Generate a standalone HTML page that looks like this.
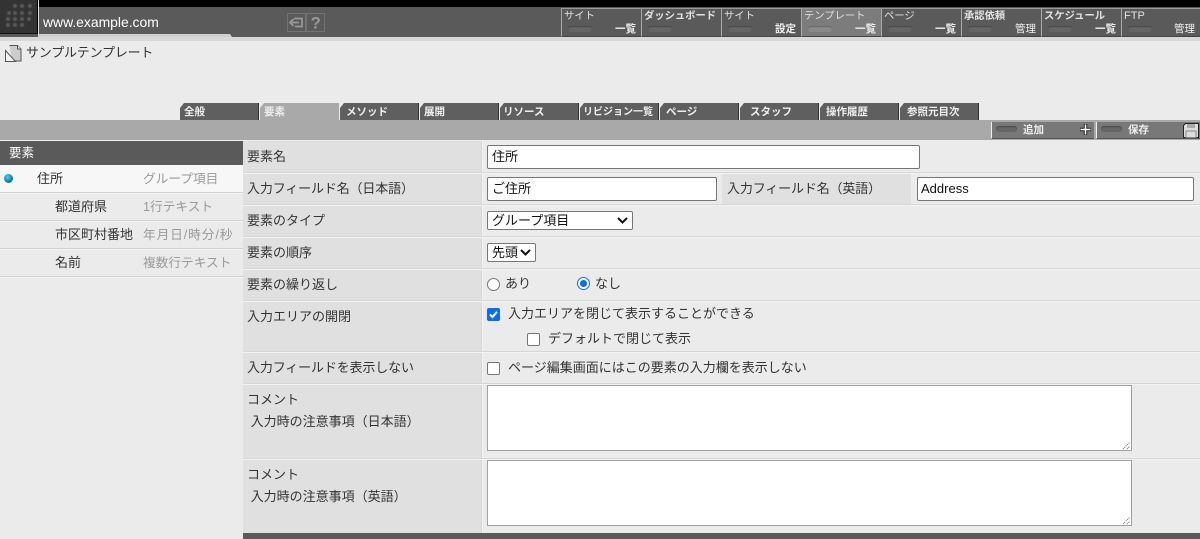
<!DOCTYPE html>
<html lang="ja"><head><meta charset="utf-8"><title>Template</title>
<style>
*{box-sizing:border-box}
html,body{margin:0;padding:0;width:1200px;height:539px;overflow:hidden;background:#ebebeb}
body{position:relative;font-family:"Liberation Sans","Noto Sans CJK JP",sans-serif;font-size:13px;color:#333}
.a{position:absolute}
.t{position:absolute;white-space:nowrap;line-height:16px}
.n{position:absolute;top:8px;width:80px;height:29px;background:#5a5a5a;border-left:1px solid #aaa;border-top:1px solid #999;border-bottom:1px solid #444;color:#e2e2e2;font-size:10.3px}
.n i{position:absolute;left:6px;top:17px;width:24px;height:6px;border-radius:3px;background:#666;box-shadow:inset 0 1px 1px #484848}
.n b{position:absolute;left:2px;top:1px;font-weight:normal;line-height:13px;white-space:nowrap}
.n u{position:absolute;right:5px;top:14px;text-decoration:none;font-weight:bold;line-height:13px;font-size:10.5px;color:#eee}
.tab{position:absolute;top:103px;width:79px;height:17px;background:#5f5f5f;color:#eee;font-size:10.5px;font-weight:bold;line-height:18px;padding-left:4px;white-space:nowrap;clip-path:polygon(4px 0,100% 0,100% 100%,0 100%,0 5px);border-right:1px solid #333}
.lb{position:absolute;background:#e0e0e0;left:243px;width:238px;padding:8px 0 0 4px;line-height:16px;color:#333;font-size:13px;white-space:nowrap}
.ln{position:absolute;left:243px;width:957px;height:2px;background:#d6d6d6;border-bottom:1px solid #f4f4f4}
.in{position:absolute;height:24px;background:#fff;border:1px solid #767676;border-radius:2px;padding:0 4px;font-size:13px;line-height:22px;color:#111;white-space:nowrap}
.sel{position:absolute;height:19px;background:#fff;border:1px solid #767676;border-radius:2px;padding-left:4px;font-size:13px;line-height:17px;color:#111;white-space:nowrap}
.ck{position:absolute;width:13px;height:13px;background:#fff;border:1px solid #767676;border-radius:2px}
.ta{position:absolute;left:487px;width:645px;height:66px;background:#fff;border:1px solid #a0a0a0}
.li{position:absolute;left:0;width:243px;height:2px;background:#d0d0d0;border-bottom:1px solid #f5f5f5}
.gr{color:#999;font-size:12.7px}
.bt{position:absolute;top:122px;height:17px;background:#787878;border-left:1px solid #eee;border-bottom:1px solid #555;color:#eee;font-size:10.5px;font-weight:bold}
.pl{position:absolute;left:4px;top:4px;width:21px;height:6px;border-radius:3px;background:#666;box-shadow:inset 0 1px 1px #484848}
</style></head><body>
<div class="a" style="left:0;top:0;width:1200px;height:7px;background:#000"></div>
<div class="a" style="left:0;top:7px;width:1200px;height:30px;background:#5a5a5a"></div>
<div class="a" style="left:38px;top:34px;width:194px;height:3px;background:#cfcfcf;clip-path:polygon(0 0,192px 0,100% 100%,0 100%)"></div>
<div class="a" style="left:0;top:37px;width:1200px;height:4px;background:#d8d8d8"></div>
<div class="a" style="left:0;top:0;width:38px;height:34px;background:#333;border-right:1px solid #000;border-bottom:1px solid #111"></div>
<div class="a" style="left:38px;top:0;width:1px;height:34px;background:#ddd"></div>
<svg class="a" style="left:0;top:0" width="38" height="34" fill="#5c5c5c">
<filter id="b"><feGaussianBlur stdDeviation=".5"/></filter>
<g filter="url(#b)">
<circle cx="15" cy="6" r="2"/><circle cx="22" cy="6" r="2"/><circle cx="30" cy="6" r="2"/>
<circle cx="9" cy="13" r="2"/><circle cx="15" cy="13" r="2"/><circle cx="22" cy="13" r="2"/><circle cx="30" cy="13" r="2"/>
<circle cx="8" cy="19" r="2"/><circle cx="15" cy="19" r="2"/><circle cx="22" cy="19" r="2"/><circle cx="29" cy="19" r="2"/>
<circle cx="8" cy="25" r="2"/><circle cx="15" cy="25" r="2"/><circle cx="22" cy="25" r="2"/>
</g></svg>
<div class="t" style="left:43px;top:14px;color:#fff;font-size:13.9px">www.example.com</div>
<svg class="a" style="left:287px;top:13px" width="38" height="20">
<rect x="0.500" y="0.500" width="18" height="18" fill="#5a5a5a" stroke="#737373"/>
<rect x="19.500" y="0.500" width="18" height="18" fill="#5a5a5a" stroke="#737373"/>
<path d="M3 9.500h9M6.500 6L3 9.500l3.500 3.500M7 5.500h8v8H8" fill="none" stroke="#999" stroke-width="1.700"/>
<text x="23.500" y="15.500" font-size="17" font-weight="bold" fill="#999" font-family="Liberation Sans">?</text>
</svg>
<div class="n" style="left:561px"><b>サイト</b><i></i><u>一覧</u></div>
<div class="n" style="left:641px"><b style="font-weight:bold">ダッシュボード</b><i></i></div>
<div class="n" style="left:721px"><b>サイト</b><i></i><u>設定</u></div>
<div class="n" style="left:801px;background:#7c7c7c"><b>テンプレート</b><i style="background:#8a8a8a;box-shadow:inset 0 1px 1px #666"></i><u>一覧</u></div>
<div class="n" style="left:881px"><b>ページ</b><i></i><u>一覧</u></div>
<div class="n" style="left:961px"><b style="font-weight:bold">承認依頼</b><i></i><u style="font-weight:normal">管理</u></div>
<div class="n" style="left:1041px"><b style="font-weight:bold">スケジュール</b><i></i><u>一覧</u></div>
<div class="n" style="left:1121px;width:79px"><b style="font-size:11px">FTP</b><i></i><u style="font-weight:normal">管理</u></div>

<svg class="a" style="left:5px;top:45px" width="17" height="17" fill="none" stroke="#555">
<path d="M4.500 .5h8l3.500 3.500v12h-9" fill="#ccc"/><path d="M.5 5.500l10 11H.5z" fill="#f2f2f2"/><path d="M12.500 .5v3.500h3.500" fill="#eee"/>
</svg>
<div class="t" style="left:26px;top:45px;font-size:13px;letter-spacing:-.2px;color:#333">サンプルテンプレート</div>

<div class="tab" style="left:180px">全般</div>
<div class="tab" style="left:260px;background:#a9a9a9;border-right:0;width:79px">要素</div>
<div class="tab" style="left:340px;padding-left:6px">メソッド</div>
<div class="tab" style="left:420px">展開</div>
<div class="tab" style="left:500px;padding-left:3px">リソース</div>
<div class="tab" style="left:580px;padding-left:3px;font-size:10px;line-height:19px">リビジョン一覧</div>
<div class="tab" style="left:660px;padding-left:6px">ページ</div>
<div class="tab" style="left:740px;padding-left:10px">スタッフ</div>
<div class="tab" style="left:820px;padding-left:6px">操作履歴</div>
<div class="tab" style="left:900px;padding-left:7px">参照元目次</div>

<div class="a" style="left:0;top:120px;width:1200px;height:20px;background:#a9a9a9"></div>
<div class="bt" style="left:991px;width:103px"><div class="pl"></div><span class="t" style="left:31px;top:0">追加</span>
<svg class="a" style="left:87px;top:1px" width="13" height="13"><path d="M6.500 1v11M1 6.500h11" stroke="#222" stroke-width="3.500"/><path d="M6.500 1.500v10M1.500 6.500h10" stroke="#fff" stroke-width="1.500"/></svg></div>
<div class="bt" style="left:1096px;width:104px"><div class="pl"></div><span class="t" style="left:31px;top:0">保存</span>
<svg class="a" style="left:86px;top:1px" width="16" height="15"><path d="M.5 2.500l2-2h13v14H.5z" fill="#ddd" stroke="#222"/><rect x="4" y="1" width="8" height="4" fill="#aaa"/><rect x="3" y="8" width="10" height="6.500" fill="#ddd" stroke="#888"/></svg></div>

<div class="a" style="left:0;top:140px;width:243px;height:1px;background:#eee"></div>
<div class="a" style="left:0;top:141px;width:243px;height:24px;background:#5a5a5a"></div>
<div class="t" style="left:9px;top:145px;color:#fff;font-size:12.500px">要素</div>
<div class="a" style="left:0;top:165px;width:243px;height:27px;background:#f7f7f7"></div>
<div class="a" style="left:4px;top:174px;width:9px;height:9px;border-radius:50%;background:radial-gradient(circle at 40% 35%,#4fd0e8,#0a7fb0 60%,#064a70)"></div>
<div class="t" style="left:37px;top:171px">住所</div><div class="t gr" style="left:143px;top:171px">グループ項目</div>
<div class="li" style="top:192px"></div>
<div class="t" style="left:55px;top:199px">都道府県</div><div class="t gr" style="left:143px;top:199px">1行テキスト</div>
<div class="li" style="top:220px"></div>
<div class="t" style="left:55px;top:227px">市区町村番地</div><div class="t gr" style="left:143px;top:227px;letter-spacing:.9px">年月日/時分/秒</div>
<div class="li" style="top:248px"></div>
<div class="t" style="left:55px;top:255px">名前</div><div class="t gr" style="left:143px;top:255px">複数行テキスト</div>
<div class="li" style="top:276px"></div>

<div class="lb" style="top:141px;height:32px">要素名</div>
<div class="lb" style="top:173px;height:32px;letter-spacing:-.15px">入力フィールド名（日本語）</div>
<div class="lb" style="top:205px;height:32px">要素のタイプ</div>
<div class="lb" style="top:237px;height:32px">要素の順序</div>
<div class="lb" style="top:269px;height:32px">要素の繰り返し</div>
<div class="lb" style="top:301px;height:51px">入力エリアの開閉</div>
<div class="lb" style="top:352px;height:32px;letter-spacing:-.15px">入力フィールドを表示しない</div>
<div class="lb" style="top:384px;height:75px;line-height:22px;padding-top:5px">コメント<br>&nbsp;入力時の注意事項（日本語）</div>
<div class="lb" style="top:459px;height:74px;line-height:22px;padding-top:5px">コメント<br>&nbsp;入力時の注意事項（英語）</div>
<div class="a" style="left:722px;top:173px;width:189px;height:32px;background:#e0e0e0"></div>
<div class="t" style="left:727px;top:181px;font-size:13px;letter-spacing:-.15px">入力フィールド名（英語）</div>
<div class="a" style="left:481px;top:141px;width:2px;height:392px;background:#d6d6d6;border-right:1px solid #f4f4f4"></div>
<div class="ln" style="top:172px"></div><div class="ln" style="top:204px"></div><div class="ln" style="top:236px"></div><div class="ln" style="top:268px"></div><div class="ln" style="top:300px"></div><div class="ln" style="top:351px"></div><div class="ln" style="top:383px"></div><div class="ln" style="top:458px"></div>

<div class="in" style="left:487px;top:145px;width:433px">住所</div>
<div class="in" style="left:487px;top:177px;width:230px">ご住所</div>
<div class="in" style="left:917px;top:177px;width:277px;padding-left:3px">Address</div>
<div class="sel" style="left:487px;top:211px;width:146px">グループ項目<svg class="a" style="right:4px;top:5px" width="11" height="7"><path d="M1 1l4.500 4.500L10 1" fill="none" stroke="#111" stroke-width="2"/></svg></div>
<div class="sel" style="left:487px;top:243px;width:49px">先頭<svg class="a" style="right:4px;top:5px" width="11" height="7"><path d="M1 1l4.500 4.500L10 1" fill="none" stroke="#111" stroke-width="2"/></svg></div>

<div class="a" style="left:487px;top:278px;width:13px;height:13px;border-radius:50%;background:#fff;border:1px solid #767676"></div>
<div class="t" style="left:505px;top:276px">あり</div>
<div class="a" style="left:577px;top:277px;width:13px;height:13px;border-radius:50%;background:#fff;border:1.500px solid #0a6cf0"><div class="a" style="left:1.500px;top:1.500px;width:7px;height:7px;border-radius:50%;background:#0a6cf0"></div></div>
<div class="t" style="left:595px;top:276px">なし</div>
<svg class="a" style="left:487px;top:308px" width="13" height="13"><rect width="13" height="13" rx="2" fill="#0a6cf0"/><path d="M3 6.500l2.500 2.500L10 3.800" fill="none" stroke="#fff" stroke-width="2"/></svg>
<div class="t" style="left:508px;top:306px">入力エリアを閉じて表示することができる</div>
<div class="ck" style="left:527px;top:333px"></div>
<div class="t" style="left:548px;top:331px">デフォルトで閉じて表示</div>
<div class="ck" style="left:487px;top:362px"></div>
<div class="t" style="left:508px;top:360px">ページ編集画面にはこの要素の入力欄を表示しない</div>

<div class="ta" style="top:385px"><svg class="a" style="right:0;bottom:0" width="9" height="9"><path d="M1 8L8 1M5 8l3-3" stroke="#666" stroke-dasharray="1 1"/></svg></div>
<div class="ta" style="top:460px"><svg class="a" style="right:0;bottom:0" width="9" height="9"><path d="M1 8L8 1M5 8l3-3" stroke="#666" stroke-dasharray="1 1"/></svg></div>
<div class="a" style="left:243px;top:533px;width:957px;height:6px;background:#5a5a5a"></div>
</body></html>
